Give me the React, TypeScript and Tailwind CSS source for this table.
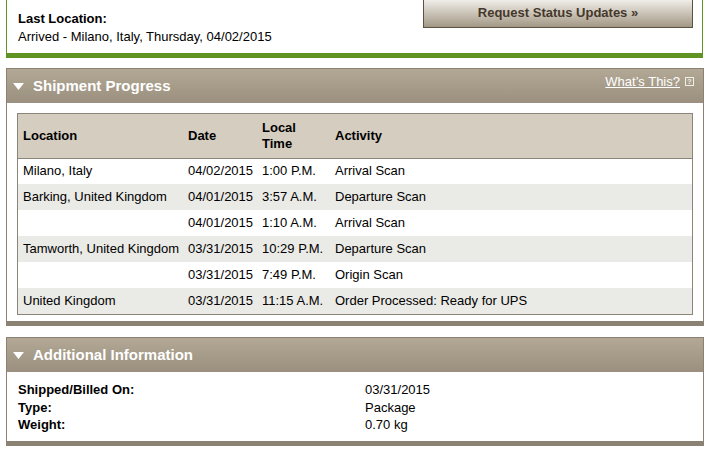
const ROWS = [
  { loc: "Milano, Italy", date: "04/02/2015", time: "1:00 P.M.", act: "Arrival Scan" },
  { loc: "Barking, United Kingdom", date: "04/01/2015", time: "3:57 A.M.", act: "Departure Scan" },
  { loc: "", date: "04/01/2015", time: "1:10 A.M.", act: "Arrival Scan" },
  { loc: "Tamworth, United Kingdom", date: "03/31/2015", time: "10:29 P.M.", act: "Departure Scan" },
  { loc: "", date: "03/31/2015", time: "7:49 P.M.", act: "Origin Scan" },
  { loc: "United Kingdom", date: "03/31/2015", time: "11:15 A.M.", act: "Order Processed: Ready for UPS" },
];

const INFO = [
  ["Shipped/Billed On:", "03/31/2015"],
  ["Type:", "Package"],
  ["Weight:", "0.70 kg"],
];

function Triangle() {
  return (
    <svg width="11" height="7" viewBox="0 0 11 7" className="shrink-0">
      <path d="M0 0 L11 0 L5.5 7 Z" fill="#ffffff" />
    </svg>
  );
}

// ─── Panel header ───────────────────────────────────────────────────────────

function PanelHeader({ title, help }: { title: string; help?: boolean }) {
  return (
    <div className="flex h-[34px] items-center bg-gradient-to-b from-[#b2a895] to-[#9b907f] pl-[6px] pr-[9px]">
      <Triangle />
      <span className="ml-[9px] text-[15px] font-bold text-white">{title}</span>
      {help && (
        <div className="ml-auto flex items-center gap-[5px] -mt-[9px]">
          <span className="text-[13px] text-white underline">What&rsquo;s This?</span>
          <span className="flex h-[9px] w-[9px] items-center justify-center border border-[#f2efe9] text-[7px] font-bold leading-none text-[#f2efe9]">
            ?
          </span>
        </div>
      )}
    </div>
  );
}

export default function App() {
  return (
    <div className="h-[455px] w-[709px] overflow-hidden bg-white font-['Liberation_Sans',Arial,sans-serif] text-[13px] leading-[18px] text-black">
      {/* Status box */}
      <div className="ml-[6px] mr-[6px] flex border-x border-b-[5px] border-[#5f9423]">
        <div className="-mt-[13px] flex flex-col pb-[7px] pl-[11px]">
          <p>Check back later.</p>
          <p className="mt-[5px] font-bold">Last Location:</p>
          <p>Arrived - Milano, Italy, Thursday, 04/02/2015</p>
        </div>
        <button className="-mt-[2px] ml-auto mr-[9px] flex h-[30px] w-[270px] items-center justify-center border border-[#5d5140] bg-gradient-to-b from-[#f3f1ec] to-[#a39886] text-[13px] font-bold text-[#45382a]">
          Request Status Updates &raquo;
        </button>
      </div>

      {/* Shipment Progress */}
      <div className="ml-[6px] mr-[5px] mt-[10px] border border-b-[5px] border-[#8c8273]">
        <PanelHeader title="Shipment Progress" help />
        <div className="bg-white px-[10px] pb-[6px] pt-[10px]">
          <div className="border border-[#8b8478]">
            <table className="w-full table-fixed border-collapse text-left">
              <colgroup>
                <col className="w-[165px]" />
                <col className="w-[74px]" />
                <col className="w-[73px]" />
                <col />
              </colgroup>
              <thead>
                <tr className="h-[44px] border-b border-[#8b8478] bg-[#d5cdbf]">
                  <th className="pl-[5px] font-bold">Location</th>
                  <th className="pl-[5px] font-bold">Date</th>
                  <th className="pl-[5px] font-bold leading-[16px]">
                    Local
                    <br />
                    Time
                  </th>
                  <th className="pl-[5px] font-bold">Activity</th>
                </tr>
              </thead>
              <tbody>
                {ROWS.map((r, i) => (
                  <tr key={i} className={`h-[26px] ${i % 2 === 1 ? "bg-[#eaeae6]" : "bg-white"}`}>
                    <td className="whitespace-nowrap pl-[5px]">{r.loc}</td>
                    <td className="whitespace-nowrap pl-[5px]">{r.date}</td>
                    <td className="whitespace-nowrap pl-[5px]">{r.time}</td>
                    <td className="whitespace-nowrap pl-[5px]">{r.act}</td>
                  </tr>
                ))}
              </tbody>
            </table>
          </div>
        </div>
      </div>

      {/* Additional Information */}
      <div className="ml-[6px] mr-[5px] mt-[11px] border border-b-[5px] border-[#8c8273]">
        <PanelHeader title="Additional Information" />
        <div className="grid grid-cols-[347px_1fr] bg-white pb-[7px] pl-[11px] pt-[9px] leading-[17.5px]">
          {INFO.map(([k, v]) => (
            <div key={k} className="contents">
              <span className="font-bold">{k}</span>
              <span>{v}</span>
            </div>
          ))}
        </div>
      </div>
    </div>
  );
}
